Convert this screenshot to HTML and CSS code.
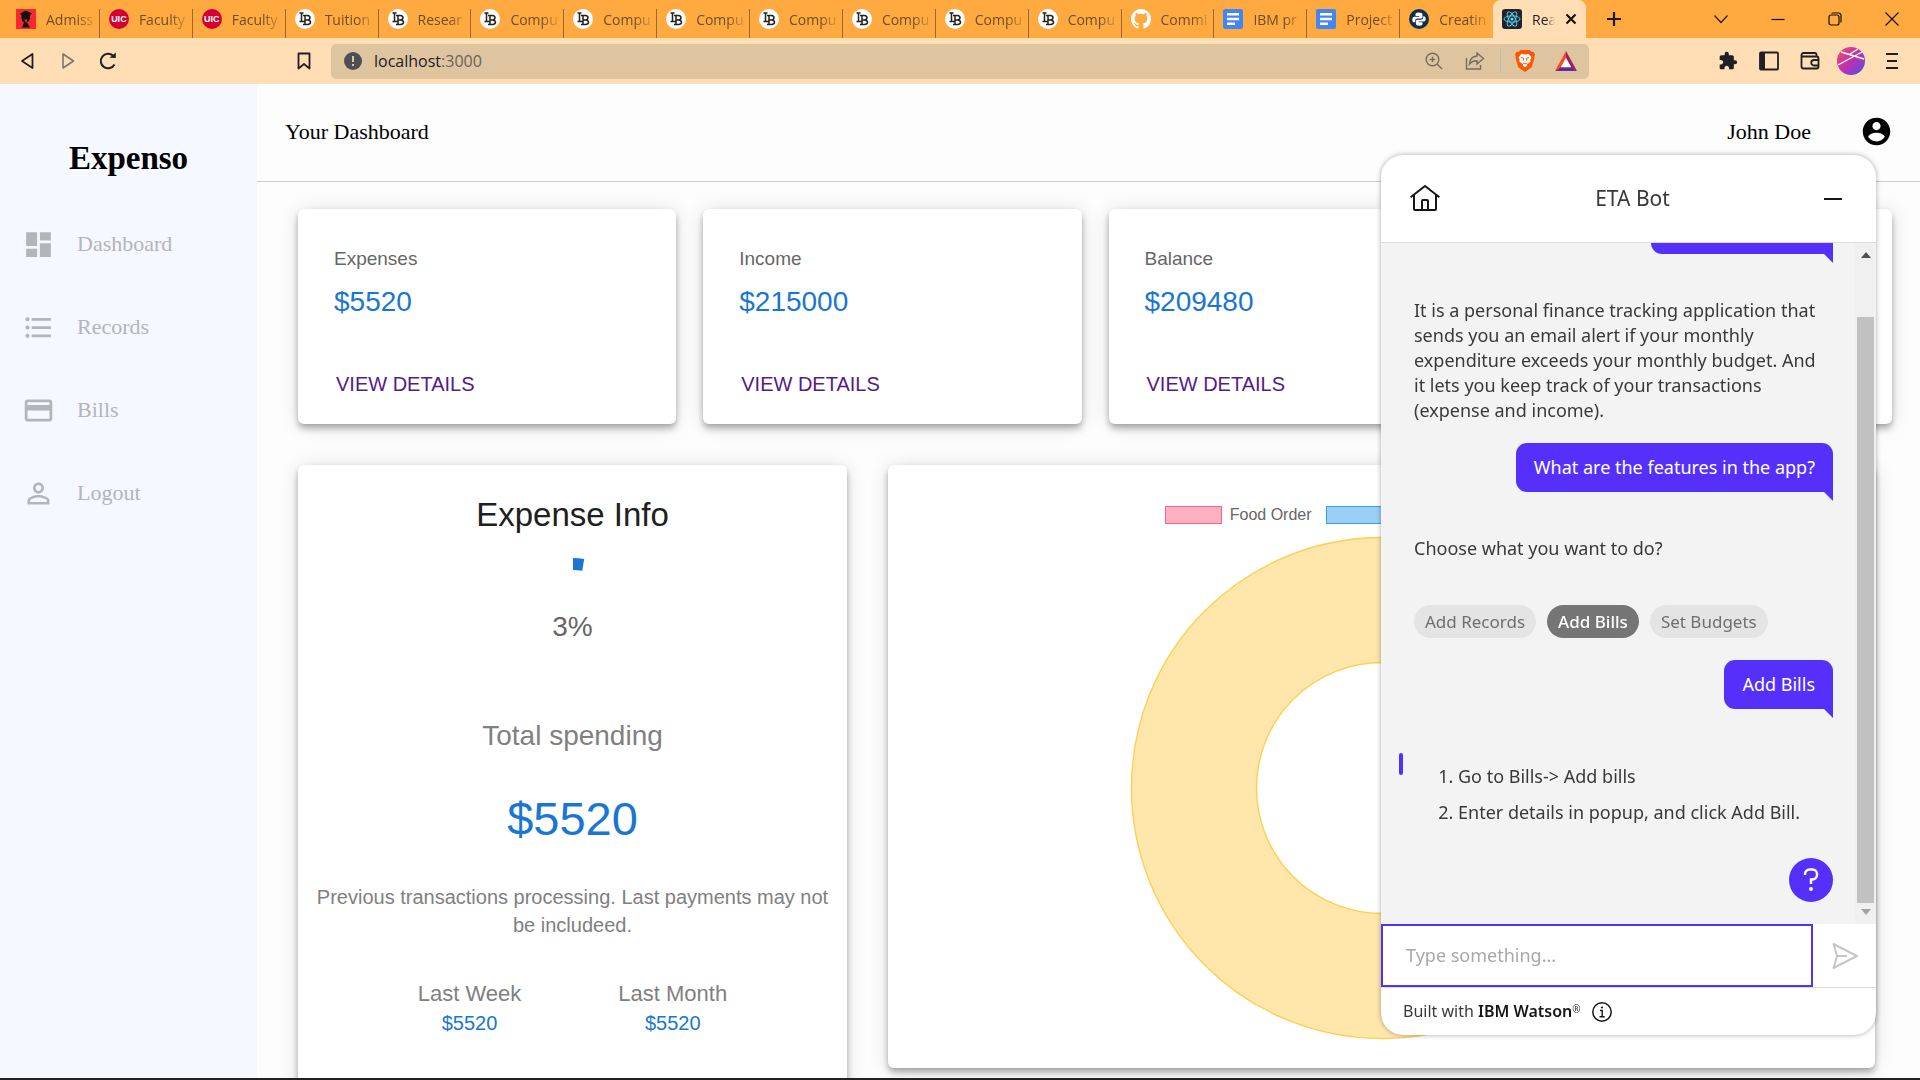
FILE: index.html
```html
<!DOCTYPE html>
<html lang="en">
<head>
<meta charset="utf-8">
<title>React App</title>
<link rel="stylesheet" href="styles.css">
</head>
<body>
<svg class="sprite" aria-hidden="true">
  <symbol id="docs" viewBox="0 0 20 20"><rect width="20" height="20" rx="2" fill="#4285f4"/><path d="M4 4h12v2.400H4zM4 8.800h12v2.400H4zM4 13.600h8v2.400H4z" fill="#fff"/></symbol>
  <symbol id="lb" viewBox="0 0 20 20"><circle cx="10" cy="10" r="10" fill="#fff"/><path d="M4.500 4h4M6.500 4v8.500M4.500 12.500h5.500V10M8 6.500h4.500q2.500.3 2.500 2.200t-2.500 2.200H10M12.500 10.900q3 .3 3 2.300T12.500 15.500H8M10 6.500v9" fill="none" stroke="#222" stroke-width="1.500"/></symbol>
</svg>
<div class="window">
  <div class="tabstrip">
    <div class="tabs">
      <div class="tab"><svg class="fav" viewBox="0 0 20 20"><rect width="20" height="20" fill="#f8282f"/><path d="M4 4.500 10 1.500l6 3-2 1.500v3.500q-1 3.500-3 4l3 5H6l2-5q-2.500-1-2.500-4V6z" fill="#111"/><path d="M8.500 10.500h3l-1.500 4z" fill="#f8282f"/></svg><button class="tab-title">Admiss</button></div>
      <div class="tab"><span class="fav fav-uic">UIC</span><button class="tab-title">Faculty</button></div>
      <div class="tab"><span class="fav fav-uic">UIC</span><button class="tab-title">Faculty</button></div>
      <div class="tab"><svg class="fav"><use href="#lb"/></svg><button class="tab-title">Tuition</button></div>
      <div class="tab"><svg class="fav"><use href="#lb"/></svg><button class="tab-title">Resear</button></div>
      <div class="tab"><svg class="fav"><use href="#lb"/></svg><button class="tab-title">Compu</button></div>
      <div class="tab"><svg class="fav"><use href="#lb"/></svg><button class="tab-title">Compu</button></div>
      <div class="tab"><svg class="fav"><use href="#lb"/></svg><button class="tab-title">Compu</button></div>
      <div class="tab"><svg class="fav"><use href="#lb"/></svg><button class="tab-title">Compu</button></div>
      <div class="tab"><svg class="fav"><use href="#lb"/></svg><button class="tab-title">Compu</button></div>
      <div class="tab"><svg class="fav"><use href="#lb"/></svg><button class="tab-title">Compu</button></div>
      <div class="tab"><svg class="fav"><use href="#lb"/></svg><button class="tab-title">Compu</button></div>
      <div class="tab"><svg class="fav" viewBox="0 0 16 16"><path fill="#fff" d="M8 0C3.580 0 0 3.580 0 8c0 3.540 2.290 6.530 5.470 7.590.4.070.55-.17.55-.38 0-.19-.01-.82-.01-1.490-2.010.37-2.530-.49-2.690-.94-.09-.23-.48-.94-.82-1.130-.28-.15-.68-.52-.01-.53.63-.01 1.080.58 1.230.82.72 1.210 1.870.87 2.330.66.070-.52.28-.87.51-1.070-1.780-.2-3.640-.89-3.640-3.950 0-.87.31-1.590.82-2.150-.08-.2-.36-1.020.08-2.120 0 0 .67-.21 2.200.82a7.600 7.600 0 0 1 4 0c1.530-1.040 2.200-.82 2.200-.82.44 1.100.16 1.920.08 2.120.51.56.82 1.270.82 2.150 0 3.070-1.870 3.750-3.650 3.950.29.25.54.73.54 1.480 0 1.070-.01 1.930-.01 2.200 0 .21.15.46.55.38A8 8 0 0 0 16 8c0-4.420-3.580-8-8-8z"/></svg><button class="tab-title">Commi</button></div>
      <div class="tab"><svg class="fav"><use href="#docs"/></svg><button class="tab-title">IBM pr</button></div>
      <div class="tab"><svg class="fav"><use href="#docs"/></svg><button class="tab-title">Project</button></div>
      <div class="tab tab-last"><svg class="fav" viewBox="0 0 20 20"><circle cx="10" cy="10" r="10" fill="#0f2f4d"/><path d="M9.500 3.500c-2.300 0-3 .8-3 2V7h3.800v.8H5.200C4 7.800 3.300 9 3.300 10.700s.7 2.600 1.800 2.600h1.100v-1.700c0-1.200 1-2 2.200-2h3.400c1 0 1.700-.8 1.700-1.700V5.500c0-1.300-1.200-2-4-2zM10.500 16.800c2.300 0 3-.8 3-2v-1.500H9.800v-.7h5.100c1.200 0 1.800-1.200 1.800-2.800s-.7-2.600-1.700-2.600h-.8v1.500c0 1.200-1 2-2.200 2H8.600c-1 0-1.700.8-1.700 1.700v2.400c0 1.300 1.100 2 3.600 2z" fill="#fff"/></svg><button class="tab-title">Creatin</button></div>
      <div class="tab tab-active"><svg class="fav" viewBox="0 0 20 20"><rect width="20" height="20" rx="3" fill="#20232a"/><g fill="none" stroke="#61dafb" stroke-width=".9"><ellipse cx="10" cy="10" rx="8" ry="3.200"/><ellipse cx="10" cy="10" rx="8" ry="3.200" transform="rotate(60 10 10)"/><ellipse cx="10" cy="10" rx="8" ry="3.200" transform="rotate(120 10 10)"/></g><circle cx="10" cy="10" r="1.600" fill="#61dafb"/></svg><button class="tab-title">Rea</button><button class="tab-close" aria-label="Close tab"><svg width="12" height="12" viewBox="0 0 12 12"><path d="M1.500 1.500l9 9M10.500 1.500l-9 9" stroke="#111" stroke-width="2.200"/></svg></button></div>
    </div>
    <button class="new-tab" aria-label="New tab"><svg width="16" height="16" viewBox="0 0 16 16"><path d="M8 1v14M1 8h14" stroke="#1c1c1c" stroke-width="2.200"/></svg></button>
    <div class="window-controls">
      <button aria-label="Search tabs"><svg width="14" height="14" viewBox="0 0 14 14"><path d="M.5 3.500 7 10.500l6.500-7" fill="none" stroke="#222" stroke-width="1.200"/></svg></button>
      <button aria-label="Minimize"><svg width="14" height="14" viewBox="0 0 14 14"><path d="M.5 7.500h13" stroke="#111" stroke-width="1.200"/></svg></button>
      <button aria-label="Restore"><svg width="14" height="14" viewBox="0 0 14 14"><g fill="none" stroke="#111" stroke-width="1.200"><rect x="1" y="3" width="10" height="10" rx="2"/><path d="M3.500 1h7a2.500 2.500 0 0 1 2.500 2.500v7"/></g></svg></button>
      <button aria-label="Close"><svg width="14" height="14" viewBox="0 0 14 14"><path d="M.5.500l13 13M13.500.500l-13 13" stroke="#111" stroke-width="1.100"/></svg></button>
    </div>
  </div>

  <div class="toolbar">
    <div class="nav-buttons">
      <button aria-label="Back"><svg width="20" height="20" viewBox="0 0 20 20"><path d="M14.500 3v14L4 10z" fill="none" stroke="#1f2023" stroke-width="1.800" stroke-linejoin="round"/></svg></button>
      <button aria-label="Forward"><svg width="20" height="20" viewBox="0 0 20 20"><path d="M5 3v14l10.500-7z" fill="none" stroke="#7b756d" stroke-width="1.600" stroke-linejoin="round"/></svg></button>
      <button aria-label="Reload"><svg width="20" height="20" viewBox="0 0 20 20"><path d="M16.500 13.500A7.300 7.300 0 1 1 15 4.600" fill="none" stroke="#1f2023" stroke-width="2"/><path d="M11.500 6.800 17.800 7V1.500z" fill="#1f2023"/></svg></button>
      <button class="bookmark" aria-label="Bookmark"><svg width="20" height="20" viewBox="0 0 20 20"><path d="M4.500 2.500h11v15L10 13l-5.500 4.500z" fill="none" stroke="#1f2023" stroke-width="1.800" stroke-linejoin="round"/></svg></button>
    </div>
    <div class="address">
      <svg width="18" height="18" viewBox="0 0 18 18"><circle cx="9" cy="9" r="9" fill="#4c4f54"/><path d="M9 4v6M9 12v2" stroke="#dfc4a0" stroke-width="2"/></svg>
      <span class="url">localhost<span class="port">:3000</span></span>
      <button class="address-zoom" aria-label="Zoom"><svg width="20" height="20" viewBox="0 0 20 20"><g fill="none" stroke="#766b5e" stroke-width="1.400"><circle cx="8.500" cy="8.500" r="6.300"/><path d="M13 13l5 5M8.500 5.700v5.600M5.700 8.500h5.600"/></g></svg></button>
      <button class="address-share" aria-label="Share"><svg width="20" height="20" viewBox="0 0 20 20"><g fill="none" stroke="#766b5e" stroke-width="1.400"><path d="M1.500 7v11h14v-4"/><path d="M12 2l6.500 5.500L12 13V9.800c-3.500 0-5.500.7-7.500 3.200.3-4.500 3-7.600 7.500-8z"/></g></svg></button>
      <span class="divider"></span>
      <button class="address-shield" aria-label="Shields"><svg width="20" height="22" viewBox="0 0 20 22"><path d="M5.500 0h9l2 2 2-.3 1.500 3-.8 2 .3 1-2.800 9.500-6.700 4.800-6.700-4.800L.500 7.700l.3-1-.8-2 1.500-3 2 .3z" fill="#ff5500"/><path d="M10 4.500l3.500-.8 3 3.500-1.200 2.500.3 2-3.600 2.600.2 1.200-2.200 2-2.200-2 .2-1.200-3.600-2.600.3-2-1.200-2.500 3-3.500z" fill="#fff"/><path d="M6 7.500l2.700.8-.5 2.400M14 7.500l-2.700.8.5 2.400M8 13l2 1 2-1" fill="none" stroke="#ff5500"/></svg></button>
      <button aria-label="Rewards"><svg width="22" height="20" viewBox="0 0 22 20"><path d="M11 0v7l5.500 9.500L22 20z" fill="#9e1f63"/><path d="M0 20h22l-5.500-4h-11z" fill="#662d91"/><path d="M11 0 0 20l5.500-3.500L11 7z" fill="#ff4724"/><path d="M11 7l5 9.200H6z" fill="#fff"/></svg></button>
    </div>
    <div class="tools">
      <button aria-label="Extensions"><svg width="20" height="20" viewBox="0 0 24 24"><path fill="#1f2023" d="M20.500 11H19V7c0-1.100-.9-2-2-2h-4V3.500a2.500 2.500 0 0 0-5 0V5H4c-1.100 0-1.990.9-1.990 2v3.800H3.500c1.490 0 2.700 1.210 2.700 2.700s-1.210 2.700-2.700 2.700H2V20c0 1.100.9 2 2 2h3.800v-1.500c0-1.490 1.210-2.700 2.700-2.700s2.700 1.210 2.700 2.700V22H17c1.100 0 2-.9 2-2v-4h1.500a2.500 2.500 0 0 0 0-5z"/></svg></button>
      <button aria-label="Sidebar"><svg width="20" height="20" viewBox="0 0 20 20"><rect x="1" y="1.500" width="18" height="17" rx="1" fill="none" stroke="#1f2023" stroke-width="1.800"/><path d="M1 1.500h5v17H1z" fill="#1f2023"/></svg></button>
      <button aria-label="Wallet"><svg width="20" height="20" viewBox="0 0 20 20"><g fill="none" stroke="#1f2023" stroke-width="1.800"><path d="M16.500 5V3.500A1.500 1.500 0 0 0 15 2H3.500A2 2 0 0 0 1.500 4 1.500 1.500 0 0 0 3 5.500h13.500q2 0 2 2v8q0 2-2 2H3.500q-2 0-2-2V4"/><path d="M18.500 9H14a2.500 2.500 0 0 0 0 5.500h4.500"/></g></svg></button>
      <button aria-label="Profile"><svg width="28" height="28" viewBox="0 0 28 28"><defs><linearGradient id="avatar" x1="0" y1="0" x2="1" y2="1"><stop offset="0" stop-color="#f5515f"/><stop offset=".5" stop-color="#c02fae"/><stop offset="1" stop-color="#4a53e8"/></linearGradient></defs><circle cx="14" cy="14" r="14" fill="url(#avatar)"/><path d="M1 18 25 5M4 5l23 7M13 7l8-5" stroke="#fff" stroke-width="1.400" fill="none"/></svg></button>
      <button aria-label="Menu"><svg width="12" height="18" viewBox="0 0 12 18"><path d="M0 2h12M1 9h10M0 16h12" stroke="#1f2023" stroke-width="1.800"/></svg></button>
    </div>
  </div>

  <div class="app">
    <nav class="sidebar">
      <h1 class="brand">Expenso</h1>
      <a class="nav-item" href="#dashboard"><svg class="icon" viewBox="0 0 24 24"><path d="M3 13h8V3H3v10zm0 8h8v-6H3v6zm10 0h8V11h-8v10zm0-18v6h8V3h-8z"/></svg>Dashboard</a>
      <a class="nav-item" href="#records"><svg class="icon" viewBox="0 0 24 24"><path d="M4 10.500c-.83 0-1.500.67-1.500 1.500s.67 1.500 1.500 1.500 1.500-.67 1.500-1.500-.67-1.500-1.500-1.500zm0-6c-.83 0-1.500.67-1.500 1.500S3.170 7.500 4 7.500 5.500 6.830 5.500 6 4.830 4.500 4 4.500zm0 12c-.83 0-1.500.68-1.500 1.500s.68 1.500 1.500 1.500 1.500-.68 1.500-1.500-.67-1.500-1.500-1.500zM7 19h14v-2H7v2zm0-6h14v-2H7v2zm0-8v2h14V5H7z"/></svg>Records</a>
      <a class="nav-item" href="#bills"><svg class="icon" viewBox="0 0 24 24"><path d="M20 4H4c-1.110 0-1.990.89-1.990 2L2 18c0 1.110.89 2 2 2h16c1.110 0 2-.89 2-2V6c0-1.110-.89-2-2-2zm0 14H4v-6h16v6zm0-10H4V6h16v2z"/></svg>Bills</a>
      <a class="nav-item" href="#logout"><svg class="icon" viewBox="0 0 24 24"><path d="M12 5.900c1.160 0 2.100.94 2.100 2.100s-.94 2.100-2.100 2.100S9.900 9.160 9.900 8s.94-2.100 2.100-2.100m0 9c2.970 0 6.100 1.460 6.100 2.100v1.100H5.900V17c0-.64 3.130-2.100 6.100-2.100M12 4C9.790 4 8 5.790 8 8s1.790 4 4 4 4-1.790 4-4-1.790-4-4-4zm0 9c-2.670 0-8 1.340-8 4v3h16v-3c0-2.660-5.330-4-8-4z"/></svg>Logout</a>
    </nav>

    <main class="main">
      <header class="page-header">
        <span>Your Dashboard</span>
        <div class="user"><span>John Doe</span><svg class="icon icon-user" viewBox="0 0 24 24"><path d="M12 2C6.480 2 2 6.480 2 12s4.480 10 10 10 10-4.480 10-10S17.520 2 12 2zm0 3c1.660 0 3 1.340 3 3s-1.340 3-3 3-3-1.340-3-3 1.340-3 3-3zm0 14.200c-2.500 0-4.710-1.280-6-3.220.03-1.990 4-3.080 6-3.080 1.990 0 5.970 1.090 6 3.080-1.290 1.940-3.500 3.220-6 3.220z"/></svg></div>
      </header>

      <div class="content">
        <section class="stats">
          <article class="card stat"><h2 class="stat-label">Expenses</h2><p class="stat-value">$5520</p><a class="stat-link" href="#records">VIEW DETAILS</a></article>
          <article class="card stat"><h2 class="stat-label">Income</h2><p class="stat-value">$215000</p><a class="stat-link" href="#records">VIEW DETAILS</a></article>
          <article class="card stat"><h2 class="stat-label">Balance</h2><p class="stat-value">$209480</p><a class="stat-link" href="#records">VIEW DETAILS</a></article>
          <article class="card stat"><h2 class="stat-label">Budget</h2><p class="stat-value">$150000</p><a class="stat-link" href="#records">VIEW DETAILS</a></article>
        </section>

        <section class="panels">
          <article class="card info">
            <h2 class="info-title">Expense Info</h2>
            <div class="progress">
              <svg viewBox="0 0 138 138"><circle cx="69" cy="69" r="63" fill="none" stroke="#1976d2" stroke-width="12" pathLength="100" stroke-dasharray="2.600 100" transform="rotate(-90 69 69)"/></svg>
              <span>3%</span>
            </div>
            <h3 class="info-subtitle">Total spending</h3>
            <p class="info-total">$5520</p>
            <p class="info-note">Previous transactions processing. Last payments may not be includeed.</p>
            <dl class="periods">
              <div><dt>Last Week</dt><dd>$5520</dd></div>
              <div><dt>Last Month</dt><dd>$5520</dd></div>
            </dl>
          </article>
          <article class="card chart">
            <ul class="legend">
              <li><span class="swatch swatch-red"></span>Food Order</li>
              <li><span class="swatch swatch-blue"></span>Shopping</li>
              <li><span class="swatch swatch-yellow"></span>Vacation</li>
            </ul>
            <svg class="donut" viewBox="0 0 504 504"><circle cx="252" cy="252" r="188" fill="none" stroke="#ffe6aa" stroke-width="125"/><g fill="none" stroke="#ffce56" stroke-width="1.400"><circle cx="252" cy="252" r="250.500"/><circle cx="252" cy="252" r="125.500"/></g></svg>
          </article>
        </section>
      </div>
    </main>
  </div>
</div>

<aside class="chat">
  <header class="chat-header">
    <button aria-label="Home"><svg width="32" height="32" viewBox="0 0 32 32"><path fill="#161616" d="M16.610 2.210a1 1 0 0 0-1.240 0L1 13.420 2.240 15 4 13.620V26a2 2 0 0 0 2 2h20a2 2 0 0 0 2-2V13.630L29.760 15 31 13.430zM18 26h-4v-8h4zm2 0v-8a2 2 0 0 0-2-2h-4a2 2 0 0 0-2 2v8H6V12.060l10-7.790 10 7.800V26z"/></svg></button>
    <span class="chat-title">ETA Bot</span>
    <button aria-label="Minimize chat"><svg width="18" height="18" viewBox="0 0 18 18"><path d="M0 9h18" stroke="#161616" stroke-width="2"/></svg></button>
  </header>
  <div class="chat-body">
    <div class="messages">
      <p class="bubble">What is Expenso?</p>
      <p class="reply">It is a personal finance tracking application that sends you an email alert if your monthly expenditure exceeds your monthly budget. And it lets you keep track of your transactions (expense and income).</p>
      <p class="bubble bubble-near">What are the features in the app?</p>
      <p class="reply">Choose what you want to do?</p>
      <div class="chips">
        <button class="chip">Add Records</button>
        <button class="chip chip-selected">Add Bills</button>
        <button class="chip">Set Budgets</button>
      </div>
      <p class="bubble bubble-near">Add Bills</p>
      <ol class="steps">
        <li>Go to Bills-&gt; Add bills</li>
        <li>Enter details in popup, and click Add Bill.</li>
      </ol>
    </div>
    <div class="scrollbar">
      <svg width="10" height="6" viewBox="0 0 10 6"><path d="M0 6h10L5 0z" fill="#505050"/></svg>
      <span class="thumb"></span>
      <svg width="10" height="6" viewBox="0 0 10 6"><path d="M0 0h10L5 6z" fill="#a3a3a3"/></svg>
    </div>
    <button class="help" aria-label="Suggestions"><svg width="22" height="26" viewBox="0 0 22 26"><path d="M5 8V7a4.500 4.500 0 0 1 4.500-4.500h3A4.500 4.500 0 0 1 17 7v1a4.500 4.500 0 0 1-4.500 4.500H11V17" fill="none" stroke="#fff" stroke-width="2.400"/><circle cx="11" cy="22" r="1.900" fill="#fff"/></svg></button>
  </div>
  <form class="composer">
    <input class="composer-input" type="text" placeholder="Type something..." aria-label="Message">
    <button class="send" type="button" aria-label="Send"><svg width="28" height="28" viewBox="0 0 28 28"><path d="M2.500 2 26 14 2.500 26 6 14zM6 14h10" fill="none" stroke="#c6c6c6" stroke-width="2" stroke-linejoin="round"/></svg></button>
  </form>
  <footer class="chat-footer">
    <span>Built with <b>IBM Watson</b><small>®</small></span>
    <svg width="20" height="20" viewBox="0 0 20 20"><circle cx="10" cy="10" r="9.200" fill="none" stroke="#161616" stroke-width="1.500"/><path d="M8 8.500h2.200v6M7.500 14.800h5.200" fill="none" stroke="#161616" stroke-width="1.400"/><circle cx="10" cy="5.500" r="1.100" fill="#161616"/></svg>
  </footer>
</aside>
</body>
</html>
```
FILE: styles.css
```css
* { box-sizing: border-box; margin: 0; padding: 0; }
html, body { height: 100%; overflow: hidden; }
body { font-family: "Liberation Serif", serif; font-size: 22px; color: #000; background: #fdfdfd; }
button { border: 0; background: none; font: inherit; color: inherit; display: flex; align-items: center; justify-content: center; cursor: pointer; }
a { text-decoration: none; color: inherit; }
ul, ol { list-style: none; }
h1, h2, h3 { font-weight: 400; }
.sprite { display: none; }

.window { height: 100vh; display: flex; flex-direction: column; border-bottom: 2px solid #222; }

/* browser chrome */
.tabstrip { display: flex; flex: none; height: 38px; padding-left: 7px; background: #ffaa40; font-family: "Open Sans", sans-serif; font-size: 14px; color: #6e4e27; }
.tabs { flex: 1; display: flex; min-width: 0; }
.tab { flex: 1 1 0; min-width: 0; display: flex; align-items: center; gap: 10px; padding: 0 2px 0 9px; background: linear-gradient(#9a6a2e, #9a6a2e) right bottom / 1px 29px no-repeat; }
.tab-last { background: none; }
.tab-active { background: #ffdeb5; border-radius: 8px 8px 0 0; color: #1c1c1c; }
.tab-title { flex: 1; min-width: 0; justify-content: flex-start; white-space: nowrap; -webkit-mask-image: linear-gradient(90deg, #000 60%, transparent); mask-image: linear-gradient(90deg, #000 60%, transparent); }
.tab-close { flex: none; margin-right: 7px; }
.tab-active .tab-title { -webkit-mask-image: linear-gradient(90deg, #000 60%, transparent); mask-image: linear-gradient(90deg, #000 60%, transparent); }
.fav { flex: none; width: 20px; height: 20px; }
.fav-uic { display: flex; align-items: center; justify-content: center; border-radius: 50%; background: #d50032; color: #fff; font: 700 9px/20px "Liberation Sans", sans-serif; }
.new-tab { width: 55px; }
.window-controls { display: flex; padding-left: 51px; }
.window-controls button { width: 57px; }

.toolbar { display: flex; align-items: center; flex: none; height: 46px; padding: 0 8px; background: #ffdeb5; }
.nav-buttons { display: flex; width: 323px; padding-right: 7px; }
.nav-buttons button { width: 40px; height: 36px; }
.nav-buttons .bookmark { margin-left: auto; }
.address { flex: 1; display: flex; align-items: center; height: 35px; padding: 0 12px 0 13px; border-radius: 5px; background: #dfc4a0; font-family: "Open Sans", sans-serif; font-size: 16px; color: #1c1c1c; }
.url { margin: 0 auto 0 12px; }
.port { color: #6a6259; }
.address-share { margin: 0 15px 0 21px; }
.divider { width: 1px; height: 24px; background: #c3bcb4; }
.address-shield { margin: 0 20px 0 14px; }
.tools { display: flex; padding-left: 118px; }
.tools button { width: 41px; height: 36px; }

/* application */
.app { flex: 1; min-height: 0; display: flex; overflow: hidden; }
.sidebar { flex: none; width: 257px; background: #f5f8ff; padding-top: 54px; }
.brand { font-size: 33px; line-height: 40px; font-weight: 700; text-align: center; margin-bottom: 46px; }
.nav-item { display: flex; align-items: center; gap: 22px; height: 40px; margin-bottom: 43px; padding-left: 22px; color: #b4b5b9; line-height: 26px; }
.icon { width: 33px; height: 33px; fill: currentColor; }
.main { flex: 1; min-width: 0; }
.page-header { display: flex; justify-content: space-between; align-items: center; height: 98px; padding: 0 27px 2px 28px; border-bottom: 1px solid #ccc; }
.user { display: flex; align-items: center; gap: 49px; }
.content { padding: 27px 28px 40px 41px; font-family: "Liberation Sans", sans-serif; }
.card { background: #fff; border-radius: 6px; box-shadow: 0 3px 6px -1px rgba(0, 0, 0, .24), 0 6px 7px rgba(0, 0, 0, .14), 0 1px 20px rgba(0, 0, 0, .12); }

.stats { display: grid; grid-template-columns: repeat(4, 1fr); gap: 27px; }
.stat { padding: 36px 36px 26px; }
.stat-label { font-size: 19px; line-height: 28px; color: #666; }
.stat-value { font-size: 28px; line-height: 40px; margin: 9px 0 48px; color: #1976d2; }
.stat-link { display: block; padding-left: 2px; font-size: 20px; line-height: 28px; color: #551a8b; }

.panels { display: grid; grid-template-columns: 549fr 987fr; gap: 41px; align-items: start; margin: 41px 17px 0 0; }
.info { padding: 30px 12px 60px; text-align: center; color: #808080; }
.info-title { font-size: 33px; line-height: 40px; color: #202020; }
.progress { display: grid; place-items: center; width: 138px; height: 138px; margin: 23px auto 20px; font-size: 28px; color: #666; }
.progress > * { grid-area: 1 / 1; }
.info-subtitle { font-size: 28px; line-height: 40px; }
.info-total { font-size: 47px; line-height: 56px; margin: 35px 0 36px; color: #1976d2; }
.info-note { font-size: 20px; line-height: 28px; }
.periods { display: flex; justify-content: center; gap: 97px; margin-top: 40px; }
.periods dt { font-size: 22px; line-height: 30px; }
.periods dd { font-size: 20px; line-height: 28px; color: #1976d2; }

.chart { padding: 41px 20px 28px; }
.legend { display: flex; justify-content: center; gap: 14px; font-size: 16px; line-height: 18px; color: #666; }
.legend li { display: flex; gap: 8px; }
.swatch { width: 57px; height: 18px; border: 1px solid; }
.swatch-red { background: #ffb1c1; border-color: #ff6384; }
.swatch-blue { background: #9ad0f5; border-color: #36a2eb; }
.swatch-yellow { background: #ffe6aa; border-color: #ffce56; }
.donut { display: block; width: 100%; max-width: 504px; margin: 12px auto 0; }

/* chat widget */
.chat { position: fixed; top: 155px; right: 44px; bottom: 45px; width: 495px; display: flex; flex-direction: column; overflow: hidden; border-radius: 22px; background: #fff; box-shadow: 0 0 5px rgba(0, 0, 0, .35); font-family: "Noto Sans", sans-serif; font-size: 18px; line-height: 25px; color: #393939; }
.chat-header { flex: none; display: flex; align-items: center; justify-content: space-between; height: 88px; padding: 0 34px 0 28px; border-bottom: 1px solid #dcdcdc; }
.chat-title { font-size: 21px; }
.chat-body { position: relative; flex: 1; min-height: 0; display: flex; background: #f3f3f3; }
.messages { flex: 1; min-width: 0; display: flex; flex-direction: column; justify-content: flex-end; overflow: hidden; padding: 0 22px 99px 33px; }
.bubble { position: relative; align-self: flex-end; padding: 12px 18px; border-radius: 11px 11px 0 11px; background: #5530fb; color: #fff; }
.bubble::after { content: ""; position: absolute; right: 0; top: 100%; border-top: 9px solid #5530fb; border-left: 9px solid transparent; }
.bubble-near { margin-top: 20px; }
.reply { margin-top: 44px; padding-right: 8px; }
.chips { display: flex; gap: 11px; margin: 44px 0 2px; }
.chip { height: 33px; padding: 0 11px; border-radius: 17px; background: #e4e4e4; color: #6f6f6f; font-size: 17px; }
.chip-selected { background: #757575; color: #fff; font-weight: 500; }
.steps { position: relative; display: flex; flex-direction: column; gap: 11px; margin-top: 55px; padding-left: 44px; list-style: decimal; }
.steps::before { content: ""; position: absolute; left: -15px; top: -11px; width: 4px; height: 22px; border-radius: 2px; background: #5530fb; }
.scrollbar { flex: none; display: flex; flex-direction: column; align-items: center; gap: 6px; width: 21px; padding: 9px 0; background: #f0f0f0; }
.thumb { flex: 1; width: 17px; margin-top: 53px; background: #c1c1c1; }
.help { position: absolute; right: 43px; bottom: 22px; width: 44px; height: 44px; border-radius: 50%; background: #5530fb; }
.composer { flex: none; display: flex; height: 64px; border-bottom: 1px solid #dcdcdc; }
.composer-input { flex: 1; min-width: 0; padding: 0 23px; border: 2px solid #5530fb; outline: 0; font: inherit; color: #161616; background: #fff; }
.composer-input::placeholder { color: #a8a8a8; opacity: 1; }
.send { width: 63px; }
.chat-footer { flex: none; display: flex; align-items: center; gap: 11px; height: 47px; padding-left: 22px; font-size: 16px; }
.chat-footer b { font-weight: 600; color: #161616; }
.chat-footer small { font-size: 10px; vertical-align: 4px; line-height: 1; }
```
